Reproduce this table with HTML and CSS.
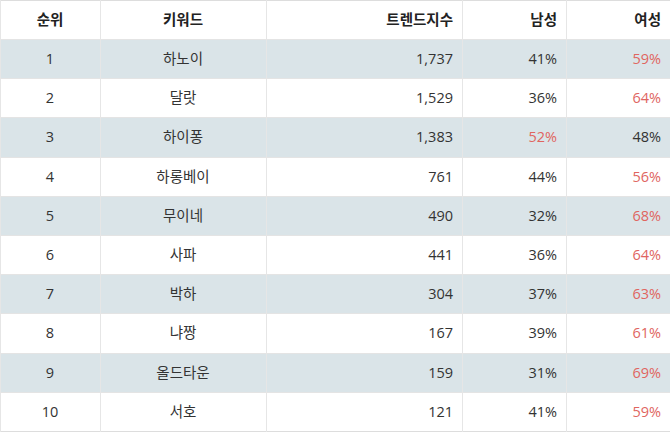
FILE: index.html
```html
<!DOCTYPE html>
<html lang="ko">
<head>
<meta charset="utf-8">
<link rel="stylesheet" href="styles.css">
</head>
<body>
<table class="rank">
  <colgroup>
    <col class="c-rank"><col class="c-kw"><col class="c-trend"><col class="c-m"><col class="c-f">
  </colgroup>
  <thead>
    <tr><th class="center">순위</th><th class="center">키워드</th><th>트렌드지수</th><th>남성</th><th>여성</th></tr>
  </thead>
  <tbody>
    <tr class="alt"><td class="center">1</td><td class="center">하노이</td><td>1,737</td><td>41%</td><td class="hi">59%</td></tr>
    <tr><td class="center">2</td><td class="center">달랏</td><td>1,529</td><td>36%</td><td class="hi">64%</td></tr>
    <tr class="alt"><td class="center">3</td><td class="center">하이퐁</td><td>1,383</td><td class="hi">52%</td><td>48%</td></tr>
    <tr><td class="center">4</td><td class="center">하롱베이</td><td>761</td><td>44%</td><td class="hi">56%</td></tr>
    <tr class="alt"><td class="center">5</td><td class="center">무이네</td><td>490</td><td>32%</td><td class="hi">68%</td></tr>
    <tr><td class="center">6</td><td class="center">사파</td><td>441</td><td>36%</td><td class="hi">64%</td></tr>
    <tr class="alt"><td class="center">7</td><td class="center">박하</td><td>304</td><td>37%</td><td class="hi">63%</td></tr>
    <tr><td class="center">8</td><td class="center">냐짱</td><td>167</td><td>39%</td><td class="hi">61%</td></tr>
    <tr class="alt"><td class="center">9</td><td class="center">올드타운</td><td>159</td><td>31%</td><td class="hi">69%</td></tr>
    <tr><td class="center">10</td><td class="center">서호</td><td>121</td><td>41%</td><td class="hi">59%</td></tr>
  </tbody>
</table>
</body>
</html>
```
FILE: styles.css
```css
html, body {
  margin: 0;
  padding: 0;
  background: #ffffff;
}
body {
  font-family: "Open Sans", "Noto Sans CJK KR", sans-serif;
  color: #333333;
  font-size: 14.5px;
}
.rank {
  width: 670px;
  height: 432px;
  border-collapse: collapse;
  table-layout: fixed;
  border: 1px solid #dddddd;
}
.c-rank { width: 100px; }
.c-kw { width: 166px; }
.c-trend { width: 196px; }
.c-m { width: 104px; }
.c-f { width: 104px; }
.rank th, .rank td {
  border-left: 1px solid #e6e6e6;
  border-right: 1px solid #e6e6e6;
  border-top: 1px solid #e4e4e4;
  padding: 0 9px 0 8px;
  text-align: right;
  vertical-align: middle;
  height: 38px;
  line-height: 20px;
}
.rank th {
  font-weight: bold;
  color: #222222;
  border-top: none;
}
.rank .center {
  text-align: center;
}
.rank tr.alt td {
  background: #dae4e8;
}
.rank td.hi {
  color: #e0655f;
}
```
